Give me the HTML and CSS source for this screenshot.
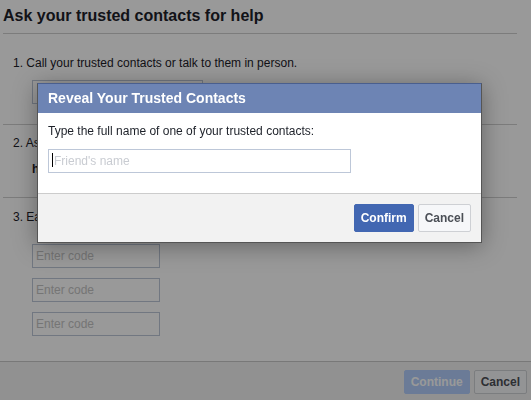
FILE: index.html
```html
<!DOCTYPE html>
<html lang="en">
<head>
<meta charset="utf-8">
<title>Ask your trusted contacts for help</title>
<link rel="stylesheet" href="styles.css">
</head>
<body>
<main class="page">
  <h2 class="page-title">Ask your trusted contacts for help</h2>
  <section class="step step-one">
    <p class="step-text">1. Call your trusted contacts or talk to them in person.</p>
    <div class="contact-box"></div>
  </section>
  <section class="step step-two">
    <p class="step-text">2. Ask them to go to this link and log into their accounts:</p>
    <p class="step-link">https://www.facebook.com/recover</p>
  </section>
  <section class="step step-three">
    <p class="step-text">3. Each trusted contact will get a code. Enter the codes below:</p>
    <div class="codes">
      <input class="code-input" type="text" placeholder="Enter code">
      <input class="code-input" type="text" placeholder="Enter code">
      <input class="code-input" type="text" placeholder="Enter code">
    </div>
  </section>
</main>
<footer class="page-footer">
  <button class="btn btn-continue" disabled>Continue</button>
  <button class="btn btn-secondary">Cancel</button>
</footer>

<div class="overlay"></div>

<div class="dialog" role="dialog">
  <div class="dialog-header">Reveal Your Trusted Contacts</div>
  <div class="dialog-body">
    <p class="dialog-text">Type the full name of one of your trusted contacts:</p>
    <div class="name-field">
      <input class="name-input" type="text" placeholder="Friend's name">
      <span class="caret"></span>
    </div>
  </div>
  <div class="dialog-footer">
    <button class="btn btn-primary btn-tall">Confirm</button>
    <button class="btn btn-secondary btn-tall">Cancel</button>
  </div>
</div>
</body>
</html>
```
FILE: styles.css
```css
* { box-sizing: border-box; }

html, body {
  margin: 0;
  padding: 0;
  height: 100%;
  overflow: hidden;
}

body {
  font-family: "Liberation Sans", Arial, sans-serif;
  font-size: 12px;
  line-height: 16px;
  color: #1d2129;
  background: #fff;
  display: flex;
  flex-direction: column;
}

p { margin: 0; }

.page {
  flex: 1;
  display: flex;
  flex-direction: column;
}

.page-title {
  margin: 0 14px 0 3px;
  padding: 6px 0 7px;
  font-size: 16px;
  line-height: 20px;
  font-weight: bold;
  color: #1d2129;
  border-bottom: 1px solid #cfcfcf;
}

.step {
  margin: 0 14px 0 3px;
  padding-left: 10px;
  display: flex;
  flex-direction: column;
  align-items: flex-start;
}

.step-one {
  padding-top: 21px;
  padding-bottom: 20px;
  border-bottom: 1px solid #cfcfcf;
  gap: 9px;
}

.step-two {
  padding-top: 10px;
  padding-bottom: 20px;
  border-bottom: 1px solid #cfcfcf;
  gap: 10px;
}

.step-three {
  padding-top: 11px;
  padding-bottom: 25px;
  gap: 19px;
}

.contact-box {
  margin-left: 19px;
  width: 171px;
  height: 24px;
  border: 1px solid #bdc7d8;
  background: #fff;
}

.step-link {
  margin-left: 19px;
  font-weight: bold;
}

.codes {
  margin-left: 19px;
  display: flex;
  flex-direction: column;
  gap: 10px;
}

.code-input {
  width: 128px;
  height: 24px;
  margin: 0;
  padding: 0 3px;
  border: 1px solid #bdc7d8;
  font-family: inherit;
  font-size: 12px;
  background: #fff;
  outline: none;
}

.code-input::placeholder { color: #c4c4c4; }

.page-footer {
  border-top: 1px solid #c8c8c8;
  background: #f2f2f2;
  padding: 8px 4px 0;
  height: 39px;
  display: flex;
  justify-content: flex-end;
  align-items: flex-start;
  gap: 4px;
}

.btn {
  height: 24px;
  margin: 0;
  padding: 0 6px;
  border: 1px solid #ced0d4;
  border-radius: 2px;
  background: #f6f7f9;
  color: #4b4f56;
  font-family: inherit;
  font-size: 12px;
  font-weight: bold;
  line-height: 22px;
  cursor: pointer;
}

.btn-tall { height: 28px; line-height: 26px; }

.btn-primary {
  background: #4267b2;
  border-color: #4267b2;
  color: #fff;
}

.btn-continue {
  background: #b2cefc;
  border-color: #b2cefc;
  color: #ffffff;
}

.overlay {
  position: fixed;
  inset: 0;
  background: rgba(0, 0, 0, 0.4);
}

.dialog {
  position: absolute;
  left: 37px;
  top: 83px;
  width: 445px;
  background: #fff;
  border: 1px solid #555;
  border-top-color: #4a5f8e;
  box-shadow: 0 3px 22px rgba(0, 0, 0, 0.35);
}

.dialog-header {
  height: 29px;
  line-height: 29px;
  padding: 0 10px;
  background: #6d84b4;
  color: #fff;
  font-size: 14px;
  font-weight: bold;
}

.dialog-body {
  padding: 10px 10px 20px;
  display: flex;
  flex-direction: column;
  gap: 10px;
}

.dialog-text { color: #1d2129; }

.name-field {
  position: relative;
  width: 303px;
  height: 24px;
}

.name-input {
  width: 100%;
  height: 24px;
  margin: 0;
  padding: 0 5px;
  border: 1px solid #bdc7d8;
  font-family: inherit;
  font-size: 12px;
  outline: none;
}

.name-input::placeholder { color: #c9ccd2; }

.caret {
  position: absolute;
  left: 4px;
  top: 4px;
  width: 1px;
  height: 14px;
  background: #000;
}

.dialog-footer {
  border-top: 1px solid #cccccc;
  background: #f2f2f2;
  padding: 10px 10px;
  display: flex;
  justify-content: flex-end;
  gap: 4px;
}
```
